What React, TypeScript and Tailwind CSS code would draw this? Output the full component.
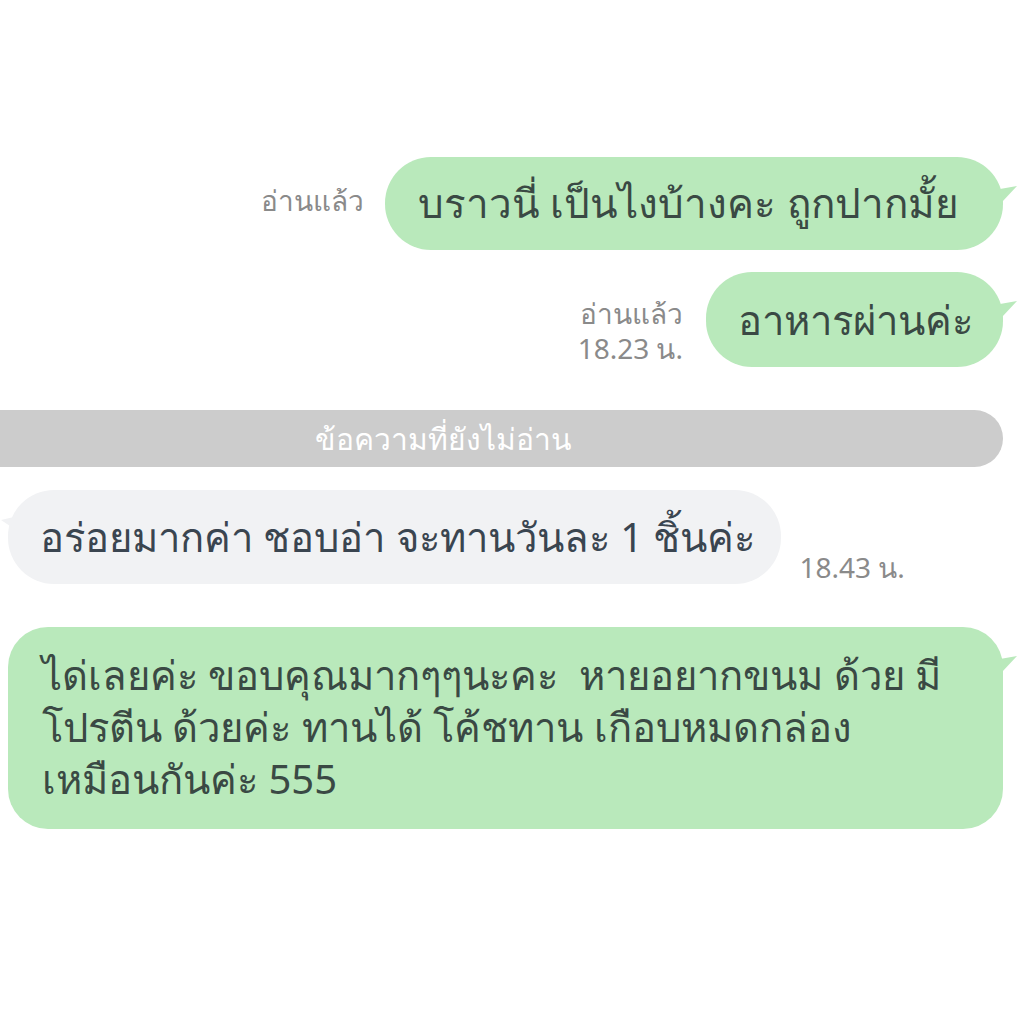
import React from "react";

const font = { fontFamily: '"Noto Sans", Roboto, "DejaVu Sans", sans-serif' };

function TailRight({ color }: { color: string }) {
  return (
    <svg width="18" height="20" viewBox="0 0 18 20" className="absolute -right-[15px] top-[28px]">
      <path d="M0 4 L17 1 L2 17 Z" fill={color} />
    </svg>
  );
}

function TailLeft({ color }: { color: string }) {
  return (
    <svg width="18" height="20" viewBox="0 0 18 20" className="absolute -left-[8px] top-[22px]">
      <path d="M18 4 L1 8 L16 18 Z" fill={color} />
    </svg>
  );
}

export default function App() {
  return (
    <div className="w-[1024px] h-[1024px] bg-white overflow-hidden pt-[157px]" style={font}>
      {/* row 1 */}
      <div className="flex justify-end items-end pr-[21px] gap-[21px]">
        <div className="text-[28px] text-[#8a8a8a] mb-[34px] leading-[32px]">อ่านแล้ว</div>
        <div className="relative bg-[#b9e9bb] rounded-[46px] h-[93px] pl-[33px] pr-[44px] flex items-center">
          <span className="text-[40.4px] text-[#3a4944]">บราวนี่ เป็นไงบ้างคะ ถูกปากมั้ย</span>
          <TailRight color="#b9e9bb" />
        </div>
      </div>

      {/* row 2 */}
      <div className="flex justify-end items-end pr-[21px] gap-[23px] mt-[22px]">
        <div className="flex flex-col items-end text-[28px] text-[#8a8a8a] leading-[35px] mb-[1px]">
          <span>อ่านแล้ว</span>
          <span>18.23 น.</span>
        </div>
        <div className="relative bg-[#b9e9bb] rounded-[46px] h-[95px] pl-[32px] pr-[30px] flex items-center">
          <span className="text-[40px] text-[#3a4944]">อาหารผ่านค่ะ</span>
          <TailRight color="#b9e9bb" />
        </div>
      </div>

      {/* unread divider */}
      <div className="mt-[43px] mr-[21px] h-[57px] bg-[#cccccc] rounded-r-full flex items-center pl-[315px]">
        <span className="text-[30px] text-white">ข้อความที่ยังไม่อ่าน</span>
      </div>

      {/* row 3 */}
      <div className="flex items-end pl-[8px] gap-[18px] mt-[23px]">
        <div className="relative bg-[#f1f2f4] rounded-[46px] h-[94px] pl-[32px] pr-[26px] flex items-center">
          <span className="text-[40px] text-[#3a4550]">อร่อยมากค่า ชอบอ่า จะทานวันละ 1 ชิ้นค่ะ</span>
          <TailLeft color="#f1f2f4" />
        </div>
        <div className="text-[28px] text-[#8a8a8a] leading-[32px] mb-[1px]">18.43 น.</div>
      </div>

      {/* row 4 */}
      <div className="pl-[8px] pr-[21px] mt-[43px]">
        <div className="relative bg-[#b9e9bb] rounded-[40px] pl-[34px] pr-[20px] pt-[22px] pb-[24px]">
          <p className="text-[40px] leading-[52px] text-[#3a4944] whitespace-nowrap">
            ได่เลยค่ะ ขอบคุณมากๆๆนะคะ&nbsp; หายอยากขนม ด้วย มี
            <br />
            โปรตีน ด้วยค่ะ ทานได้ โค้ชทาน เกือบหมดกล่อง
            <br />
            เหมือนกันค่ะ 555
          </p>
          <TailRight color="#b9e9bb" />
        </div>
      </div>
    </div>
  );
}
